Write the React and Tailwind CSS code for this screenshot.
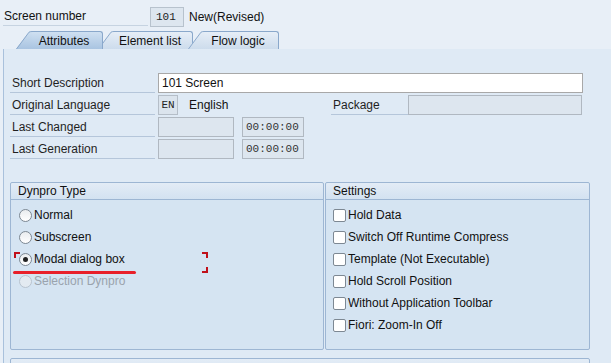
import React from 'react';

const sans = { fontFamily: '"Liberation Sans", Arial, sans-serif' };

// Label with the thin line underneath, SAP style
const FieldLabel = ({ children, width }) => (
    <div className={`${width} h-[20px] flex items-end pl-[2px] border-b border-[#b5c6da] text-[12px] leading-[18px] text-[#1f1f1f]`}>
        {children}
    </div>
);

const Tab = ({ id, label, active, width, first }) => (
    <div className={`relative flex h-[18px] ${first ? '' : '-ml-[5px]'} ${active ? 'z-20' : 'z-10'}`}>
        <svg width="16" height="18" viewBox="0 0 16 18" className="block">
            <defs>
                <linearGradient id={`tabgrad-${id}`} x1="0" y1="0" x2="0" y2="1">
                    <stop offset="0" stopColor={active ? '#cfe0f1' : '#e6eef7'} />
                    <stop offset="1" stopColor={active ? '#a9c4e1' : '#cddcec'} />
                </linearGradient>
            </defs>
            <path d="M0 18 L13 1 Q14 0 16 0 L16 18 Z" fill={`url(#tabgrad-${id})`} />
            <path d="M0.5 18 L13 1.2 Q14 0.5 16 0.5" fill="none" stroke="#8aa8cb" />
        </svg>
        <div
            className={`${width} h-[18px] flex items-center justify-center border-t border-r border-[#8aa8cb] rounded-tr-[3px] text-[12px] text-[#111] ${active ? 'bg-gradient-to-b from-[#cfe0f1] to-[#a9c4e1]' : 'bg-gradient-to-b from-[#e6eef7] to-[#cddcec]'}`}
        >
            <span className="-ml-[6px]">{label}</span>
        </div>
    </div>
);

const Radio = ({ label, checked, disabled }) => (
    <div className="h-[22px] flex items-center">
        <span className={`w-[13px] h-[13px] rounded-full border flex items-center justify-center ${disabled ? 'border-[#b8c3cf] bg-[#e3eaf1]' : 'border-[#7d8893] bg-gradient-to-b from-[#e9ecef] to-white'}`}>
            {checked && <span className="w-[5px] h-[5px] rounded-full bg-[#222]" />}
        </span>
        <span className={`ml-[2px] text-[12px] ${disabled ? 'text-[#9aa3ad]' : 'text-[#111]'}`}>{label}</span>
    </div>
);

const Check = ({ label }) => (
    <div className="h-[22px] flex items-center">
        <span className="w-[13px] h-[13px] rounded-[2px] border border-[#7d8893] bg-white" />
        <span className="ml-[2px] text-[12px] text-[#111]">{label}</span>
    </div>
);

const GroupBox = ({ title, width, children }) => (
    <div className={`${width} h-[168px] border border-[#9db6d3] rounded-[2px] bg-[#d5e4f2] flex flex-col`}>
        <div className="h-[17px] border-b border-[#9db6d3] bg-gradient-to-b from-[#e3ecf6] to-[#d3e2f1] pl-[7px] text-[12px] leading-[16px] text-[#111] rounded-t-[2px]">
            {title}
        </div>
        {children}
    </div>
);

const App = () => {
    return (
        <div className="w-[611px] h-[363px] overflow-hidden bg-[#e8eff7] flex flex-col" style={sans}>
            {/* screen number header */}
            <div className="flex items-center h-[20px] mt-[7px] pl-[3px]">
                <div className="w-[145px] h-[18px] border-b border-[#c6d3e1] pl-[1px] text-[12px] leading-[16px] text-[#111]">Screen number</div>
                <div className="ml-[2px] w-[34px] h-[20px] border border-[#b7c2cd] bg-[#dde6ef] flex items-center pl-[5px] text-[11px] text-[#222]" style={{ fontFamily: '"Liberation Mono", monospace' }}>101</div>
                <span className="ml-[5px] text-[12px] text-[#111]">New(Revised)</span>
            </div>

            {/* tab strip */}
            <div className="flex mt-[4px] pl-[16px]">
                <Tab id="attr" label="Attributes" active width="w-[71px]" first />
                <Tab id="elem" label="Element list" width="w-[79px]" />
                <Tab id="flow" label="Flow logic" width="w-[75px]" />
            </div>
            <div className="h-[2px] bg-[#93b3d7]" />
            <div className="h-[2px] bg-[#5f88bb]" />

            {/* content */}
            <div className="flex-1 ml-[3px] border-l border-[#a9c1dc] bg-[#dfeaf5] pt-[24px] pl-[6px]">
                <div className="flex flex-col gap-[2px]">
                    <div className="flex items-center h-[20px]">
                        <FieldLabel width="w-[145px]">Short Description</FieldLabel>
                        <div className="ml-[3px] w-[425px] h-[20px] border border-[#a8a8a8] bg-white flex items-center pl-[3px] text-[12px] text-[#111]">101 Screen</div>
                    </div>
                    <div className="flex items-center h-[20px]">
                        <FieldLabel width="w-[145px]">Original Language</FieldLabel>
                        <div className="ml-[3px] w-[20px] h-[20px] border border-[#b5bec8] bg-[#dbe4ed] flex items-center justify-center text-[11px] text-[#222]" style={{ fontFamily: '"Liberation Mono", "Courier New", monospace' }}>EN</div>
                        <span className="ml-[11px] w-[142px] text-[12px] text-[#111]">English</span>
                        <FieldLabel width="w-[77px]">Package</FieldLabel>
                        <div className="w-[174px] h-[20px] border border-[#b0b8c1] bg-[#dde6ef]" />
                    </div>
                    {['Last Changed', 'Last Generation'].map(l => (
                        <div key={l} className="flex items-center h-[20px]">
                            <FieldLabel width="w-[145px]">{l}</FieldLabel>
                            <div className="ml-[3px] w-[76px] h-[20px] border border-[#b0b8c1] bg-[#dde6ef]" />
                            <div className="ml-[8px] w-[62px] h-[20px] border border-[#b0b8c1] bg-[#dde6ef] flex items-center pl-[3px] text-[11px] text-[#333]" style={{ fontFamily: '"Liberation Mono", monospace' }}>00:00:00</div>
                        </div>
                    ))}
                </div>

                {/* group boxes */}
                <div className="flex gap-[1px] mt-[23px]">
                    <GroupBox title="Dynpro Type" width="w-[314px]">
                        <div className="relative flex flex-col pl-[8px] pt-[4px]">
                            <Radio label="Normal" />
                            <Radio label="Subscreen" />
                            <Radio label="Modal dialog box" checked />
                            <Radio label="Selection Dynpro" disabled />
                            {/* red annotation marks */}
                            <span className="absolute left-[3px] top-[52px] w-[6px] h-[6px] border-l-2 border-t-2 border-[#c0101a]" />
                            <span className="absolute left-[191px] top-[52px] w-[6px] h-[6px] border-r-2 border-t-2 border-[#c0101a]" />
                            <span className="absolute left-[191px] top-[67px] w-[6px] h-[6px] border-r-2 border-b-2 border-[#c0101a]" />
                            <span className="absolute left-[2px] top-[71px] w-[123px] h-[3px] rounded-full bg-[#e8202a]" />
                        </div>
                    </GroupBox>
                    <GroupBox title="Settings" width="w-[265px]">
                        <div className="flex flex-col pl-[7px] pt-[4px]">
                            <Check label="Hold Data" />
                            <Check label="Switch Off Runtime Compress" />
                            <Check label="Template (Not Executable)" />
                            <Check label="Hold Scroll Position" />
                            <Check label="Without Application Toolbar" />
                            <Check label="Fiori: Zoom-In Off" />
                        </div>
                    </GroupBox>
                </div>
                <div className="mt-[8px] w-[580px] h-[20px] border border-[#9db6d3] rounded-[2px] bg-gradient-to-b from-[#e3ecf6] to-[#d3e2f1] pl-[18px] pt-[2px] text-[12px] leading-[14px] text-[#111]">
                    Other Attributes
                </div>
            </div>
        </div>
    );
};

export default App;
